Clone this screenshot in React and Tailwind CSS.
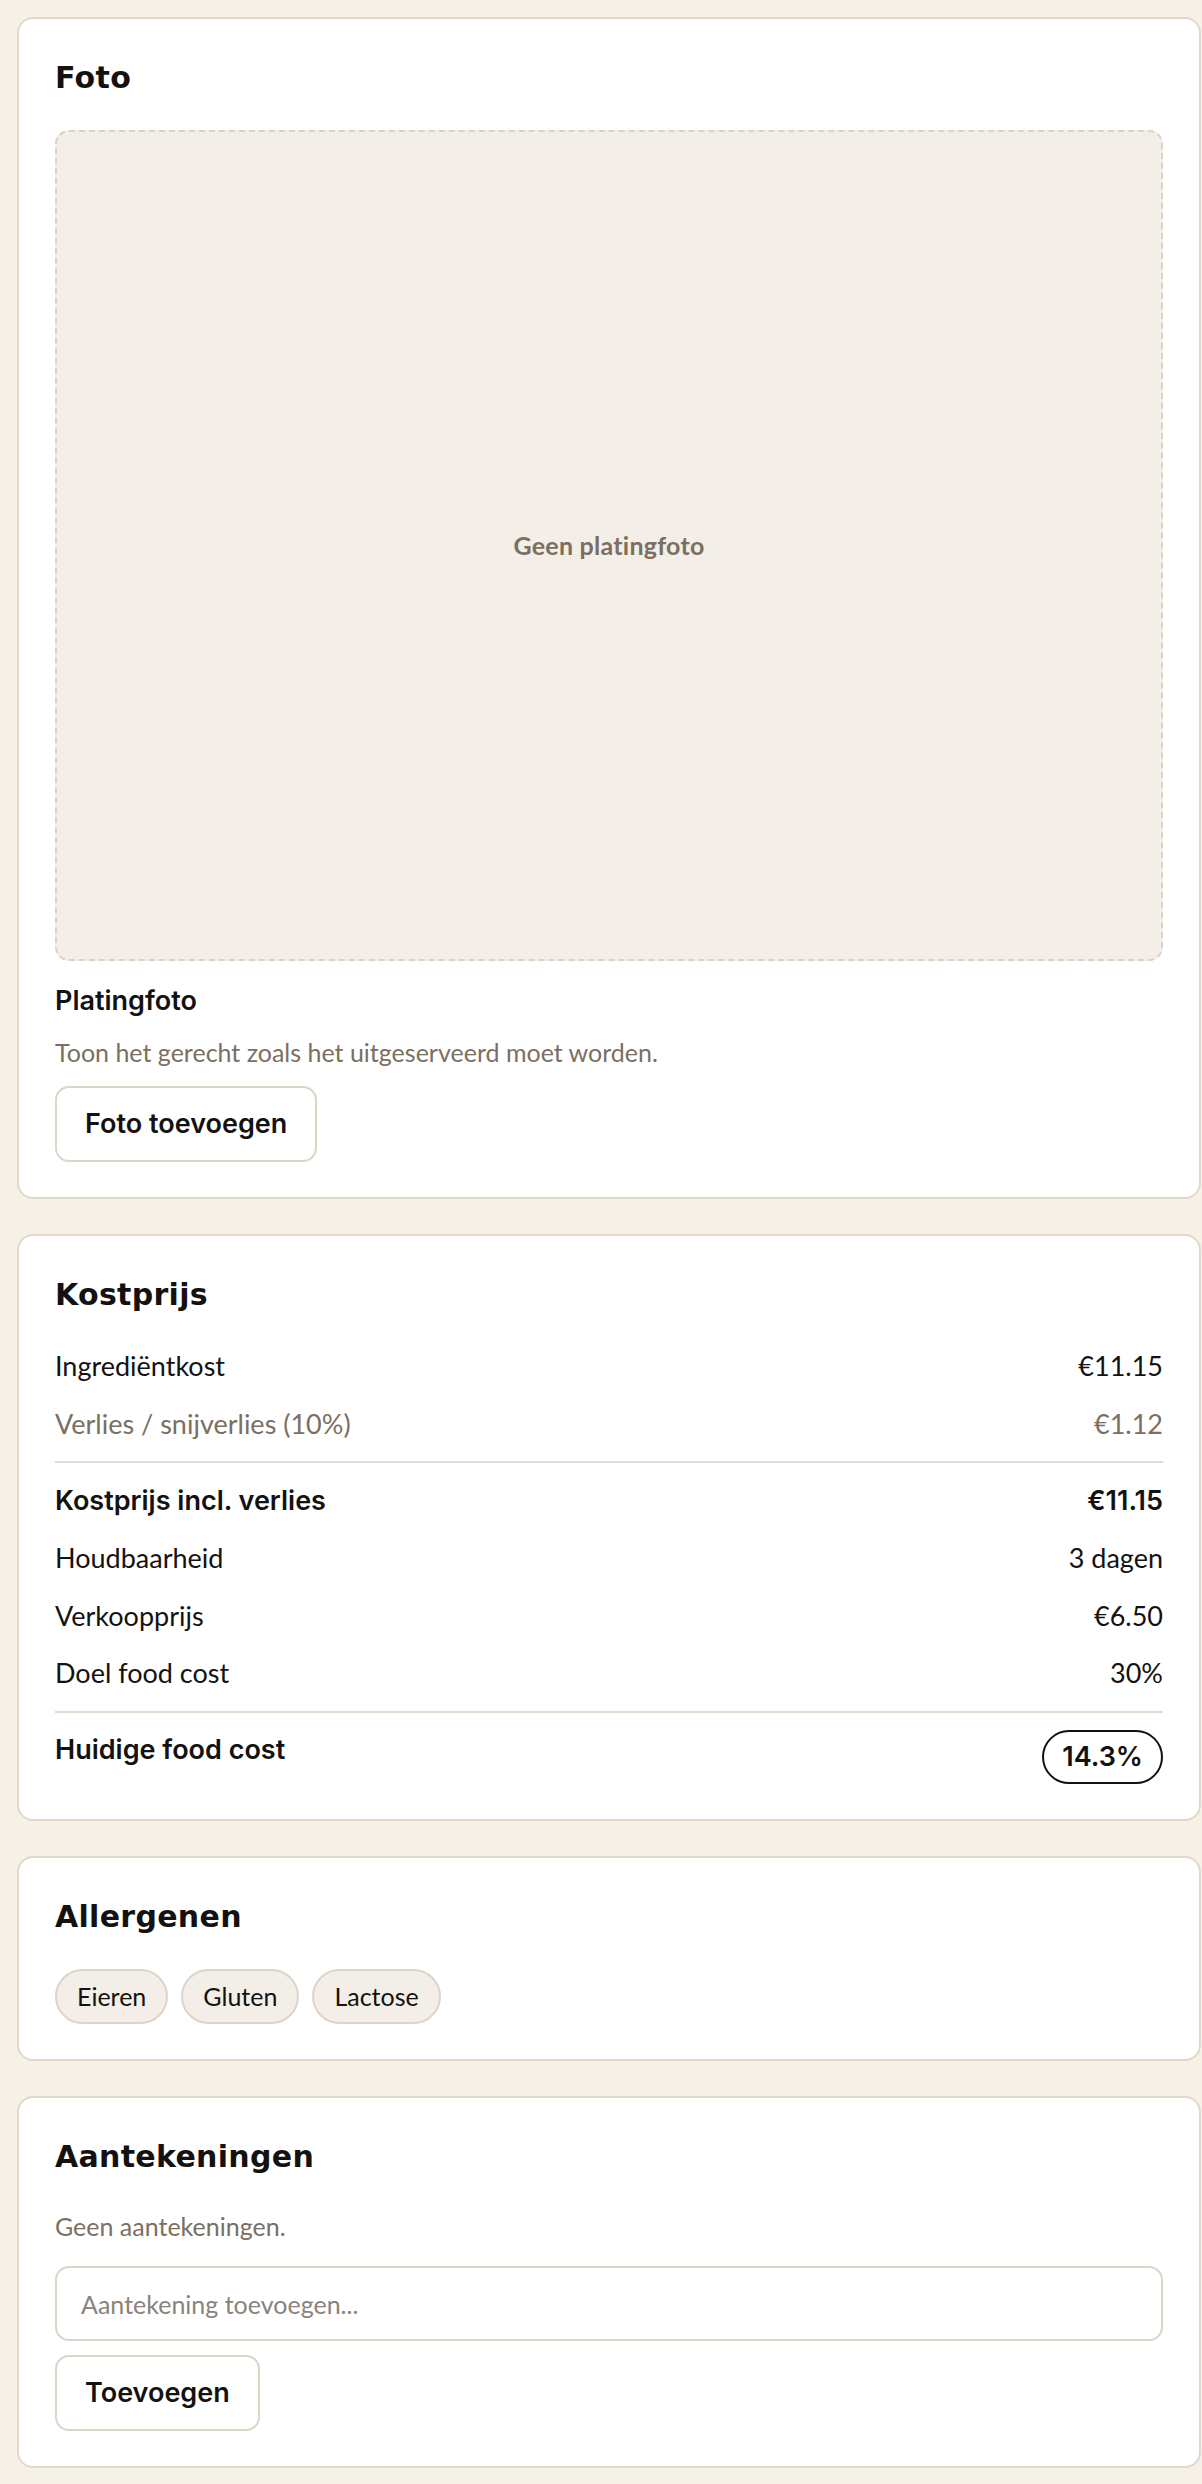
import React from "react";

const strong = "font-['Inter','Lato',sans-serif] font-semibold";

function Card({ title, children }) {
  return (
    <section className="rounded-[16px] border-2 border-[#e0d8cb] bg-white px-[36px] pt-[38px] pb-[35px]">
      <h2 className="font-['DejaVu_Sans',sans-serif] text-[30px] leading-[42px] font-bold tracking-[0.01em] text-[#141210]">
        {title}
      </h2>
      {children}
    </section>
  );
}

function Row({ label, value, tone = "normal" }) {
  const cls =
    tone === "muted"
      ? "text-[#7b6f62]"
      : tone === "bold"
      ? `${strong} text-[#141210]`
      : "text-[#141210]";
  return (
    <div className={`flex items-center justify-between text-[27px] leading-[40px] ${cls}`}>
      <span>{label}</span>
      <span>{value}</span>
    </div>
  );
}

function Divider() {
  return <div className="h-[2px] bg-[#e2dbcf]" />;
}

function OutlineButton({ children }) {
  return (
    <button className={`h-[76px] rounded-[14px] border-2 border-[#ddd5c8] bg-white px-[28px] text-[27px] leading-[36px] ${strong} text-[#141210]`}>
      {children}
    </button>
  );
}

export default function App() {
  const allergens = ["Eieren", "Gluten", "Lactose"];

  return (
    <div className="min-h-screen bg-[#f6f1e7] pl-[17px] pr-[1px] pt-[17px] pb-[20px] font-['Lato','Noto_Sans',sans-serif]">
      <div className="flex flex-col gap-[35px]">
        <Card title="Foto">
          <div className="mt-[31px] flex aspect-[4/3] w-full items-center justify-center rounded-[14px] border-2 border-dashed border-[#dad2c5] bg-[#f3eee7]">
            <span className="text-[25px] font-bold tracking-[0.01em] text-[#7b6f62]">Geen platingfoto</span>
          </div>
          <div className={`mt-[22px] text-[27px] leading-[36px] ${strong} text-[#141210]`}>Platingfoto</div>
          <p className="mt-[15px] text-[25px] leading-[36px] text-[#7b6f62]">
            Toon het gerecht zoals het uitgeserveerd moet worden.
          </p>
          <div className="mt-[16px]">
            <OutlineButton>Foto toevoegen</OutlineButton>
          </div>
        </Card>

        <Card title="Kostprijs">
          <div className="mt-[30px] flex flex-col gap-[17.5px]">
            <Row label="Ingrediëntkost" value="€11.15" />
            <Row label="Verlies / snijverlies (10%)" value="€1.12" tone="muted" />
            <Divider />
            <Row label="Kostprijs incl. verlies" value="€11.15" tone="bold" />
            <Row label="Houdbaarheid" value="3 dagen" />
            <Row label="Verkoopprijs" value="€6.50" />
            <Row label="Doel food cost" value="30%" />
            <Divider />
            <div className="flex items-start justify-between">
              <span className={`text-[27px] leading-[40px] ${strong} text-[#141210]`}>Huidige food cost</span>
              <span className={`flex h-[54px] items-center rounded-full border-2 border-[#141210] px-[18px] text-[27px] ${strong} text-[#141210]`}>
                14.3%
              </span>
            </div>
          </div>
        </Card>

        <Card title="Allergenen">
          <div className="mt-[31px] flex flex-wrap gap-[13px]">
            {allergens.map((a) => (
              <span
                key={a}
                className="flex h-[55px] items-center rounded-full border-2 border-[#ddd5c8] bg-[#f3eee7] px-[20px] text-[25px] text-[#141210]"
              >
                {a}
              </span>
            ))}
          </div>
        </Card>

        <Card title="Aantekeningen">
          <p className="mt-[30px] text-[25px] leading-[36px] text-[#7b6f62]">Geen aantekeningen.</p>
          <input
            type="text"
            placeholder="Aantekening toevoegen..."
            className="mt-[22px] block h-[75px] w-full rounded-[14px] border-2 border-[#ddd5c8] bg-white px-[24px] text-[25px] text-[#141210] outline-none placeholder:text-[#8a837b]"
          />
          <div className="mt-[14px]">
            <OutlineButton>Toevoegen</OutlineButton>
          </div>
        </Card>
      </div>
    </div>
  );
}
